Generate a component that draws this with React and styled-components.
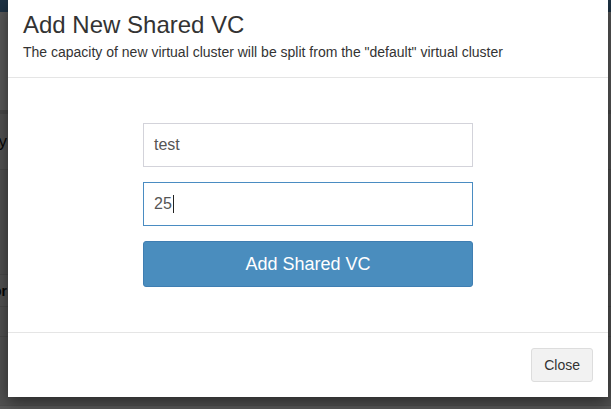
import styled, { createGlobalStyle } from "styled-components";

const GlobalStyle = createGlobalStyle`
  html, body {
    margin: 0;
    padding: 0;
  }
  body {
    font-family: "Liberation Sans", Arial, sans-serif;
    color: #333;
  }
  * {
    box-sizing: border-box;
  }
`;

// page rows that show through the backdrop at the left edge
const rows = [
  { label: "Summary", height: 59, bold: false, tint: "#ececec" },
  { label: "", height: 105, bold: false, tint: "#e6e6e6" },
  { label: "Actions for", height: 32, bold: true, tint: "#ececec" },
  { label: "", height: 30, bold: false, tint: "#e8e8e8" },
  { label: "", height: 69, bold: false, tint: "#e8e8e8" },
];

const App = () => {
  return (
    <Page>
      <GlobalStyle />
      <NavBar />
      <Content>
        {rows.map((row, i) => (
          <BgRow key={i} $height={row.height} $tint={row.tint} $first={i === 0}>
            <RowLabel $bold={row.bold}>{row.label}</RowLabel>
          </BgRow>
        ))}
      </Content>
      <Backdrop />
      <Modal>
        <Header>
          <Title>Add New Shared VC</Title>
          <Subtitle>
            The capacity of new virtual cluster will be split from the
            "default" virtual cluster
          </Subtitle>
        </Header>
        <Body>
          <Form>
            <Field>
              <FieldValue>test</FieldValue>
            </Field>
            <Field $focused>
              <FieldValue>25</FieldValue>
              <Caret />
            </Field>
            <PrimaryButton type="button">Add Shared VC</PrimaryButton>
          </Form>
        </Body>
        <Footer>
          <DefaultButton type="button">Close</DefaultButton>
        </Footer>
      </Modal>
    </Page>
  );
};

const Page = styled.div`
  position: relative;
  width: 611px;
  height: 409px;
  overflow: hidden;
  background: #fff;
`;

const NavBar = styled.div`
  height: 12px;
  background: #5892c6;
`;

const Content = styled.div`
  display: flex;
  flex-direction: column;
  padding-top: 98px;
  border-bottom: 1px solid #ddd;
`;

const BgRow = styled.div`
  display: flex;
  align-items: center;
  height: ${(p) => p.$height}px;
  background: ${(p) => p.$tint};
  border-top: ${(p) => (p.$first ? 4 : 1)}px solid #d2d2d2;
`;

const RowLabel = styled.span`
  display: flex;
  justify-content: flex-end;
  width: 7px;
  overflow: hidden;
  white-space: nowrap;
  font-size: ${(p) => (p.$bold ? "14px" : "17px")};
  font-weight: ${(p) => (p.$bold ? 700 : 400)};
  color: #111;
`;

const Backdrop = styled.div`
  position: absolute;
  inset: 0;
  background: rgba(0, 0, 0, 0.65);
`;

const Modal = styled.div`
  position: absolute;
  left: 8px;
  top: 0;
  width: 600px;
  background: #fff;
  box-shadow: 0 5px 15px rgba(0, 0, 0, 0.5);
  display: flex;
  flex-direction: column;
`;

const Header = styled.div`
  padding: 11px 15px 15px;
  border-bottom: 1px solid #e5e5e5;
`;

const Title = styled.h4`
  margin: 0 0 3px;
  font-size: 24px;
  font-weight: 400;
  line-height: 28px;
  color: #333;
`;

const Subtitle = styled.div`
  font-size: 14px;
  line-height: 20px;
  color: #333;
`;

const Body = styled.div`
  display: flex;
  justify-content: center;
  padding: 45px 15px;
`;

const Form = styled.div`
  display: flex;
  flex-direction: column;
  gap: 15px;
  width: 330px;
`;

const Field = styled.div`
  display: flex;
  align-items: center;
  height: 44px;
  padding: 0 10px;
  border: 1px solid ${(p) => (p.$focused ? "#4a8cc2" : "#d3d3da")};
  background: #fff;
  font-size: 16px;
  color: #555;
`;

const FieldValue = styled.span`
  line-height: 20px;
`;

const Caret = styled.span`
  width: 1px;
  height: 18px;
  margin-left: 1px;
  background: #222;
`;

const PrimaryButton = styled.button`
  height: 46px;
  border: 1px solid #3f7eb2;
  border-radius: 3px;
  background: #4a8dbe;
  color: #fff;
  font-family: inherit;
  font-size: 18px;
  cursor: pointer;
`;

const Footer = styled.div`
  display: flex;
  justify-content: flex-end;
  padding: 15px;
  border-top: 1px solid #e5e5e5;
`;

const DefaultButton = styled.button`
  height: 34px;
  padding: 0 12px;
  border: 1px solid #ddd;
  border-radius: 3px;
  background: #f2f2f2;
  color: #333;
  font-family: inherit;
  font-size: 14px;
  cursor: pointer;
`;

export default App;
